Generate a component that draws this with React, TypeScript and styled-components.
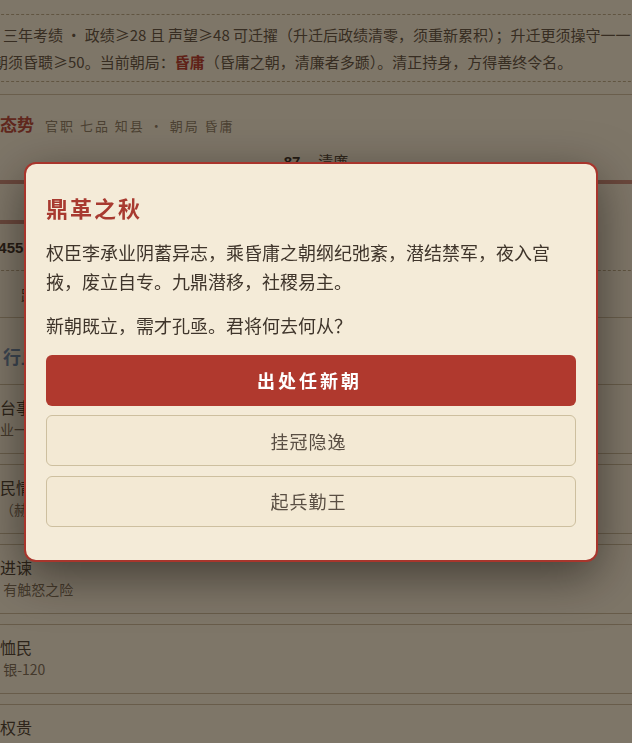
import React from "react";
import styled, { createGlobalStyle } from "styled-components";

const GlobalStyle = createGlobalStyle`
  html, body {
    margin: 0;
    padding: 0;
  }
  body {
    background: #f3ead6;
    color: #5e5243;
    font-family: "Noto Sans CJK SC", "Noto Sans", sans-serif;
  }
`;

const items = [
  { title: "奏报台事", sub: "令功业一新" },
  { title: "体察民情", sub: "民望（赫赫）" },
  { title: "直言进谏", sub: "言辞 有触怒之险" },
  { title: "开仓恤民", sub: "所费 银-120" },
  { title: "结交权贵", sub: "" },
];

const choices = ["出处任新朝", "挂冠隐逸", "起兵勤王"];

/* ---------- page behind the dialog ---------- */

const Page = styled.div`
  height: 743px;
  overflow: hidden;
`;

const Sheet = styled.div`
  width: 700px;
  margin-left: -34px;
`;

const TopStrip = styled.div`
  height: 14px;
`;

const NoteBox = styled.div`
  border-top: 1px dashed #b6a585;
  border-bottom: 1px dashed #b6a585;
  padding: 6px 0;
  font-size: 15px;
  line-height: 27px;
`;

const NoteLine = styled.div<{ $indent: number }>`
  padding-left: ${(p) => p.$indent}px;
  white-space: nowrap;
`;

const Em = styled.b`
  color: #b23a2e;
`;

const Rule = styled.div`
  margin-top: 12px;
  border-top: 1px solid #c8b99b;
`;

const SectionHead = styled.div`
  display: flex;
  align-items: baseline;
  gap: 11px;
  padding-top: 17px;
  line-height: 24px;
`;

const SectionName = styled.span`
  font-size: 17px;
  font-weight: 700;
  color: #b4463a;
`;

const SectionMeta = styled.span`
  font-size: 13px;
  letter-spacing: 2px;
  color: #8a7c66;
`;

const StatRow = styled.div`
  display: flex;
  justify-content: center;
  align-items: baseline;
  gap: 18px;
  margin-top: 13px;
  line-height: 20px;
`;

const StatValue = styled.span`
  font-family: "Liberation Sans", sans-serif;
  font-size: 15px;
  font-weight: 700;
  color: #3a3028;
`;

const StatLabel = styled.span`
  font-size: 15px;
  color: #4e4336;
`;

const TabBand = styled.div`
  margin-top: 8px;
  border-top: 4px solid #c98a7b;
  height: 36px;
`;

const TabUnderline = styled.div`
  width: 630px;
  height: 4px;
  background: #c98a7b;
`;

const BalanceRow = styled.div`
  height: 46px;
  display: flex;
  align-items: center;
  padding-left: 24px;
  border-bottom: 1px dashed #b6a585;
  font-family: "Liberation Sans", sans-serif;
  font-size: 15px;
  font-weight: 700;
  color: #3a3028;
`;

const DistanceRow = styled.div`
  height: 46px;
  display: flex;
  align-items: center;
  padding-left: 55px;
  border-bottom: 1px solid #c8b99b;
  font-size: 15px;
  color: #4e4336;
`;

const ActionHead = styled.div`
  height: 66px;
  box-sizing: border-box;
  padding: 26px 0 0 37px;
  line-height: 24px;
  font-size: 18px;
  font-weight: 700;
  color: #6a86a8;
`;

const ItemList = styled.div`
  display: flex;
  flex-direction: column;
  gap: 10px;
`;

const Item = styled.div`
  border-top: 1px solid #c4b597;
  border-bottom: 1px solid #c4b597;
  padding: 11px 0 13px 2px;
`;

const ItemTitle = styled.div`
  font-size: 16px;
  line-height: 22px;
  color: #4a3f33;
`;

const ItemSub = styled.div`
  margin-left: 4px;
  font-size: 14px;
  line-height: 22px;
  color: #7a6c58;
`;

/* ---------- dialog ---------- */

const Overlay = styled.div`
  position: fixed;
  inset: 0;
  box-sizing: border-box;
  padding: 0 10px 19px 0;
  display: flex;
  align-items: center;
  justify-content: center;
  background: rgba(20, 12, 4, 0.52);
`;

const Dialog = styled.div`
  width: 574px;
  box-sizing: border-box;
  padding: 26px 20px 33px;
  background: #f4ebd8;
  border: 2px solid #a8352c;
  border-radius: 12px;
  box-shadow: 0 14px 48px rgba(10, 5, 0, 0.5);
`;

const Title = styled.h2`
  margin: 0 0 14px;
  font-size: 22px;
  line-height: 34px;
  font-weight: 700;
  letter-spacing: 2px;
  color: #a83a30;
`;

const Para = styled.p`
  margin: 0 0 15px;
  max-width: 510px;
  font-size: 18px;
  line-height: 28.8px;
  color: #3f352b;
`;

const Actions = styled.div`
  display: flex;
  flex-direction: column;
  gap: 9.5px;
  margin-top: 2px;
`;

const ChoiceButton = styled.button<{ $primary?: boolean }>`
  height: 51px;
  border-radius: 6px;
  font-family: inherit;
  font-size: 18px;
  cursor: pointer;
  border: ${(p) => (p.$primary ? "none" : "1px solid #cdbf9f")};
  background: ${(p) => (p.$primary ? "#b0392e" : "#f3e9d4")};
  color: ${(p) => (p.$primary ? "#ffffff" : "#5a4f44")};
  font-weight: ${(p) => (p.$primary ? 700 : 400)};
  letter-spacing: ${(p) => (p.$primary ? "3px" : "1px")};
  padding-left: ${(p) => (p.$primary ? "3px" : "1px")};
`;

export default function App() {
  return (
    <>
      <GlobalStyle />
      <Page>
        <Sheet>
          <TopStrip />
          <NoteBox>
            <NoteLine $indent={37}>
              三年考绩 · 政绩≥28 且 声望≥48 可迁擢（升迁后政绩清零，须重新累积）；升迁更须操守一一
            </NoteLine>
            <NoteLine $indent={27}>
              朝须昏聩≥50。当前朝局：<Em>昏庸</Em>（昏庸之朝，清廉者多踬）。清正持身，方得善终令名。
            </NoteLine>
          </NoteBox>
          <Rule />
          <SectionHead>
            <SectionName>时局态势</SectionName>
            <SectionMeta>官职 七品 知县 · 朝局 昏庸</SectionMeta>
          </SectionHead>
          <StatRow>
            <StatValue>87</StatValue>
            <StatLabel>清廉</StatLabel>
          </StatRow>
          <TabBand />
          <TabUnderline />
          <BalanceRow>1455</BalanceRow>
          <DistanceRow>距下次考绩尚余</DistanceRow>
          <ActionHead>行止</ActionHead>
          <ItemList>
            {items.map((it) => (
              <Item key={it.title}>
                <ItemTitle>{it.title}</ItemTitle>
                {it.sub && <ItemSub>{it.sub}</ItemSub>}
              </Item>
            ))}
          </ItemList>
        </Sheet>
      </Page>

      <Overlay>
        <Dialog>
          <Title>鼎革之秋</Title>
          <Para>
            权臣李承业阴蓄异志，乘昏庸之朝纲纪弛紊，潜结禁军，夜入宫掖，废立自专。九鼎潜移，社稷易主。
          </Para>
          <Para>新朝既立，需才孔亟。君将何去何从？</Para>
          <Actions>
            {choices.map((c, i) => (
              <ChoiceButton key={c} $primary={i === 0}>
                {c}
              </ChoiceButton>
            ))}
          </Actions>
        </Dialog>
      </Overlay>
    </>
  );
}
